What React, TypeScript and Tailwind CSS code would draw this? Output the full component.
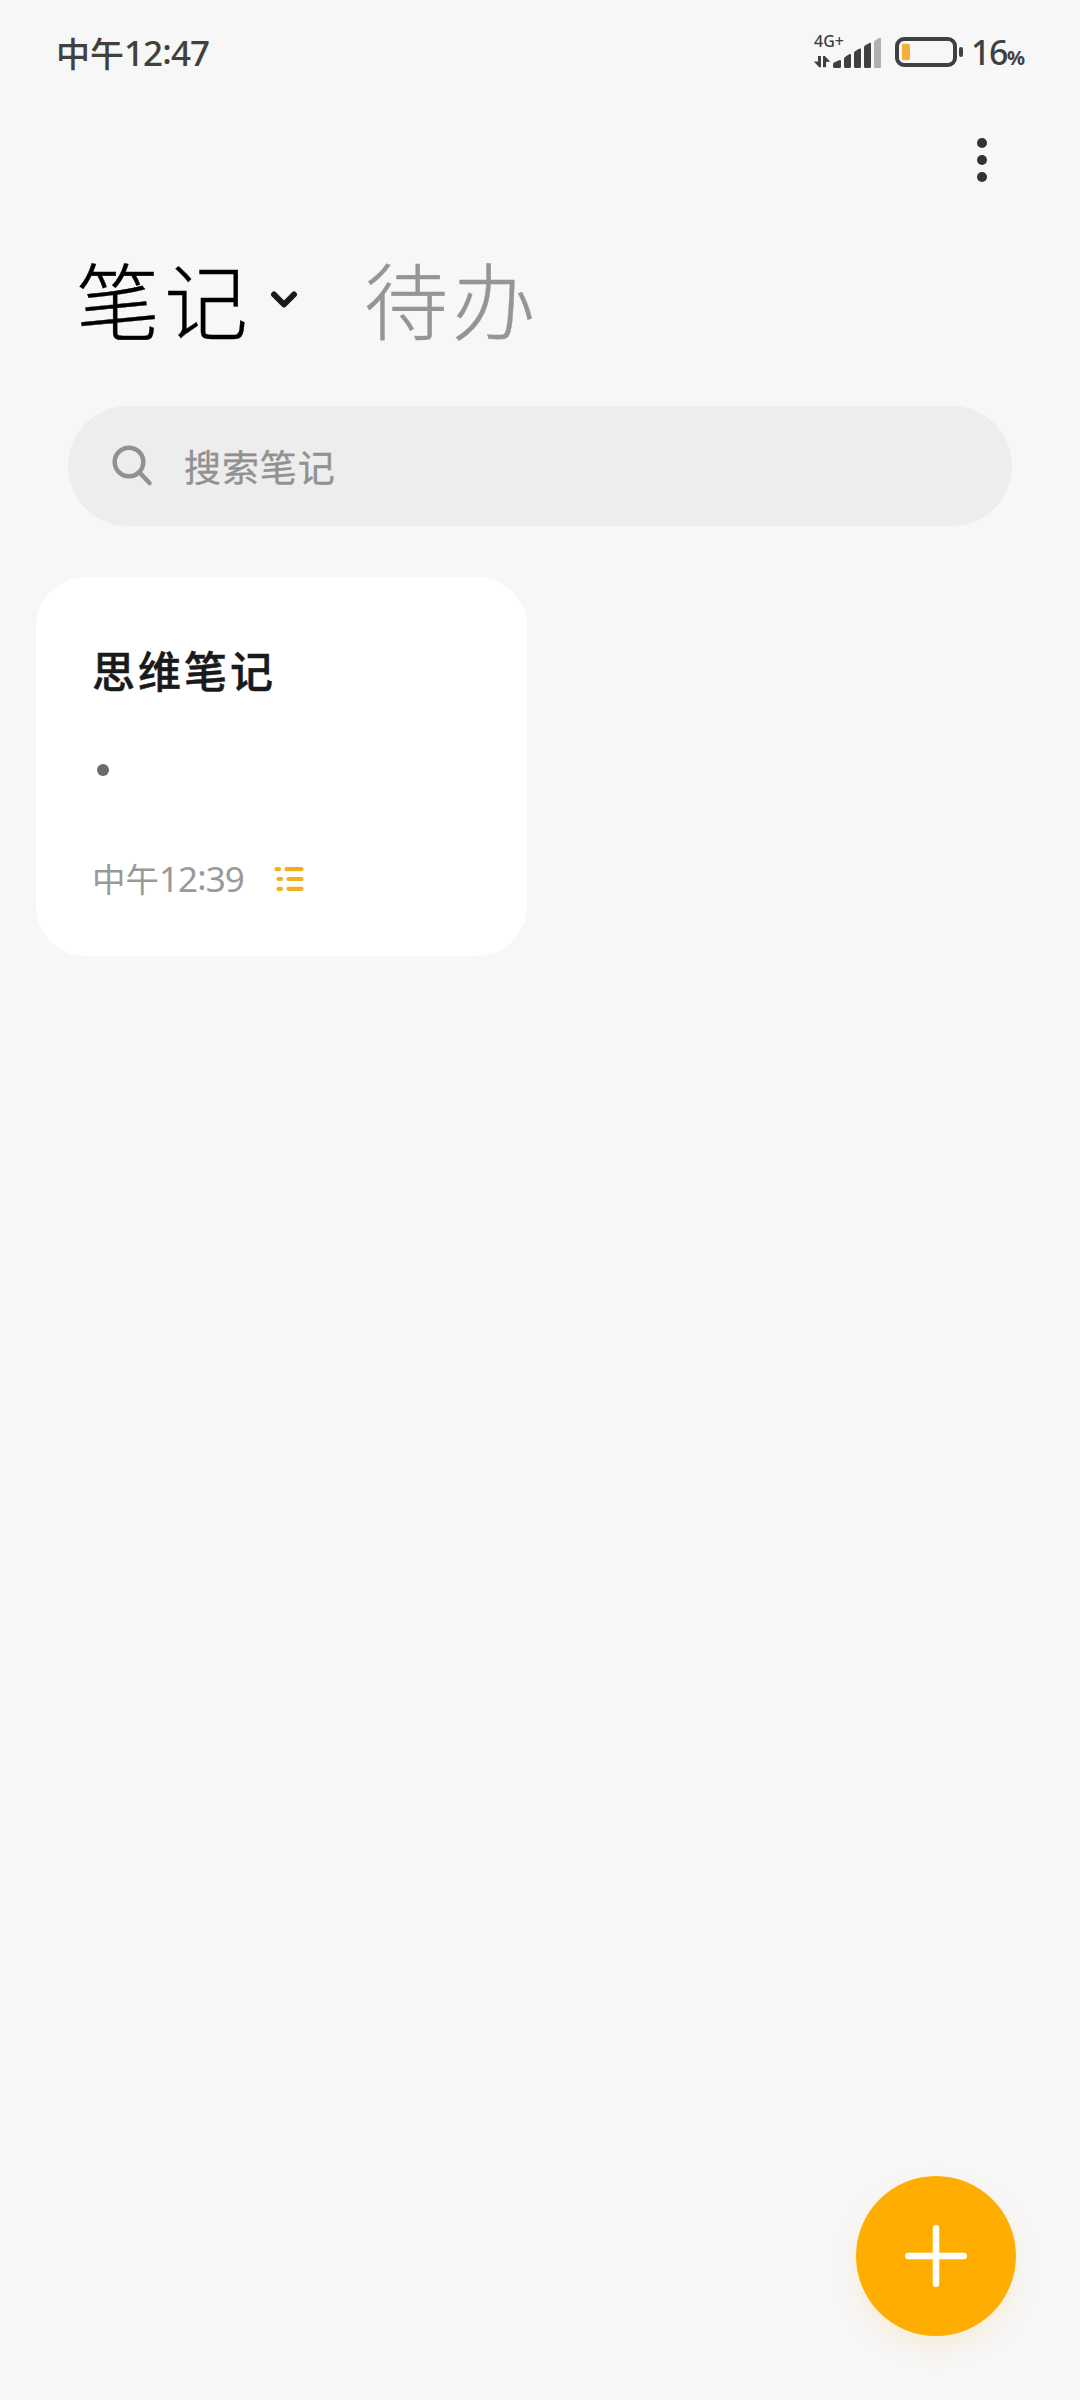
import React from 'react';

const cjk = "font-['Noto_Sans_CJK_SC',sans-serif]";

function SignalIcon() {
  return (
    <svg className="block" width="70" height="34" viewBox="812 36 70 34" fill="#404040">
      <path d="M818 56h3v11.300h-1.800l-5.400-5.800h4.200z" />
      <path d="M823 67.300V56h1.900l5.400 5.800h-4.200v5.500z" />
      <path d="M833 66.500v-2.300q0-1 1-1.600l5-2.400q2-.8 2 1v5.300q0 1.500-1.500 1.500h-5q-1.500 0-1.500-1.500z" />
      <path d="M844 66.500v-7.800q0-1.200 1-1.800l4.100-2.600q1.900-1 1.900.8v11.400q0 1.500-1.500 1.500h-4q-1.500 0-1.500-1.500z" />
      <path d="M854 66.500V53q0-1.200 1-1.800l4.100-2.400q1.900-1 1.900.8v16.900q0 1.500-1.500 1.500h-4q-1.500 0-1.500-1.500z" />
      <path d="M864 66.500V47.400q0-1.200 1-1.800l4.100-2.400q1.900-1 1.900.8v22.500q0 1.500-1.500 1.500h-4q-1.500 0-1.500-1.500z" />
      <path fill="#b0b0b0" d="M874 66.500V42.200q0-1.200 1-1.800l4.100-2.400q1.900-1 1.900.8v27.700q0 1.500-1.500 1.500h-4q-1.500 0-1.500-1.500z" />
    </svg>
  );
}

function BatteryIcon() {
  return (
    <svg className="ml-[13px] mt-[37px] block" width="68" height="30" viewBox="0 0 68 30">
      <rect x="2" y="2" width="58" height="26" rx="7" fill="none" stroke="#404040" strokeWidth="4" />
      <rect x="7" y="6.800" width="8" height="16.400" rx="2" fill="#f2af3b" />
      <rect x="64" y="10" width="4" height="10" rx="2" fill="#404040" />
    </svg>
  );
}

function ListIcon() {
  return (
    <svg className="ml-[30px] block" width="30" height="24" viewBox="0 0 30 24" fill="none" stroke="#efb01f" strokeWidth="4.200" strokeLinecap="round">
      <path d="M2.500 2.200h2.500M12.500 2.200h15M4.500 12h2.500M14.500 12h13M4.500 21.800h2.500M14.500 21.800h13" />
    </svg>
  );
}

function Clock({ hour, minute }: { hour: string; minute: string }) {
  return (
    <span className="font-['Noto_Sans',sans-serif] text-[35px] leading-[50px] tracking-[-0.900px]">
      {hour}
      <span className="relative top-[-2px]">:</span>
      {minute}
    </span>
  );
}

function StatusBar() {
  return (
    <header className="flex h-[104px] items-start pl-[56px] text-[#404040]">
      <div className="flex items-start pt-[28px] font-medium">
        <span className={`${cjk} text-[34px] leading-[49px]`}>中午</span>
        <Clock hour="12" minute="47" />
      </div>
      <div className="relative ml-auto mt-[36px]">
        <SignalIcon />
        <span className="absolute left-[2px] top-[-5px] font-['Noto_Sans',sans-serif] text-[16px] font-medium leading-[20px]">4G+</span>
      </div>
      <BatteryIcon />
      <div className="ml-[8px] mr-[53px] mt-[27px] flex w-[56px] items-baseline font-['Noto_Sans',sans-serif] font-medium">
        <span className="text-[34px] leading-[50px] tracking-[-1.500px]">16</span>
        <span className="text-[20px] font-bold leading-[20px]">%</span>
      </div>
    </header>
  );
}

export default function App() {
  return (
    <div className="flex h-[2400px] w-[1080px] flex-col bg-[#f7f7f7]">
      <StatusBar />
      <div className="flex h-[112px] justify-end pr-[93px] pt-[34px]">
        <button aria-label="更多" className="flex h-[44px] flex-col justify-between">
          <span className="size-[10px] rounded-full bg-[#333]" />
          <span className="size-[10px] rounded-full bg-[#333]" />
          <span className="size-[10px] rounded-full bg-[#333]" />
        </button>
      </div>
      <nav className={`${cjk} flex h-[190px] items-start pl-[76px] pt-[22px] text-[84px] font-light leading-[120px] tracking-[4px]`}>
        <span className="text-black [-webkit-text-stroke:0.400px_#000]">笔记</span>
        <svg className="ml-[18px] mt-[52px] block" width="28" height="20" viewBox="0 0 28 20" fill="none" stroke="#1a1a1a" strokeWidth="6" strokeLinecap="round" strokeLinejoin="round">
          <path d="M4 4.500L14 14.500L24 4.500" />
        </svg>
        <span className="ml-[66px] text-[#959595] [-webkit-text-stroke:0.400px_#959595]">待办</span>
      </nav>
      <div className="mx-[68px] flex h-[120px] shrink-0 items-center rounded-full bg-[#ededed] pl-[44px]">
        <svg className="block" width="42" height="42" viewBox="0 0 42 42" fill="none" stroke="#919191" strokeWidth="4.500" strokeLinecap="round">
          <circle cx="17" cy="17" r="14.300" />
          <path d="M28 28L37.500 38" />
        </svg>
        <span className={`${cjk} ml-[30px] text-[37px] leading-[54px] tracking-[0.900px] text-[#919191] [-webkit-text-stroke:0.300px_#919191]`}>搜索笔记</span>
      </div>
      <main className="mt-[51px] flex-1 pl-[36px]">
        <article className="flex h-[379px] w-[491px] flex-col rounded-[50px] bg-white pl-[56px]">
          <h2 className={`${cjk} mt-[60px] text-[43px] font-medium leading-[64px] tracking-[3px] text-[#1a1a1a] [-webkit-text-stroke:0.500px_#1a1a1a]`}>思维笔记</h2>
          <span className="ml-[5px] mt-[63px] size-[12px] rounded-full bg-[#6b6b6b]" />
          <div className="mt-[78px] flex h-[50px] items-center text-[#999]">
            <span className={`${cjk} -mt-[2px] text-[33.500px] leading-[50px]`}>中午</span>
            <Clock hour="12" minute="39" />
            <ListIcon />
          </div>
        </article>
      </main>
      <footer className="flex h-[224px] shrink-0 justify-end pr-[64px]">
        <button aria-label="新建笔记" className="grid size-[160px] place-items-center rounded-full bg-[#ffad00] shadow-[0_12px_24px_rgba(255,173,0,0.12)]">
          <svg width="62" height="62" viewBox="0 0 62 62" fill="none" stroke="#fff" strokeWidth="6.500" strokeLinecap="round">
            <path d="M31 3.300V58.700M3.300 31H58.700" />
          </svg>
        </button>
      </footer>
    </div>
  );
}
